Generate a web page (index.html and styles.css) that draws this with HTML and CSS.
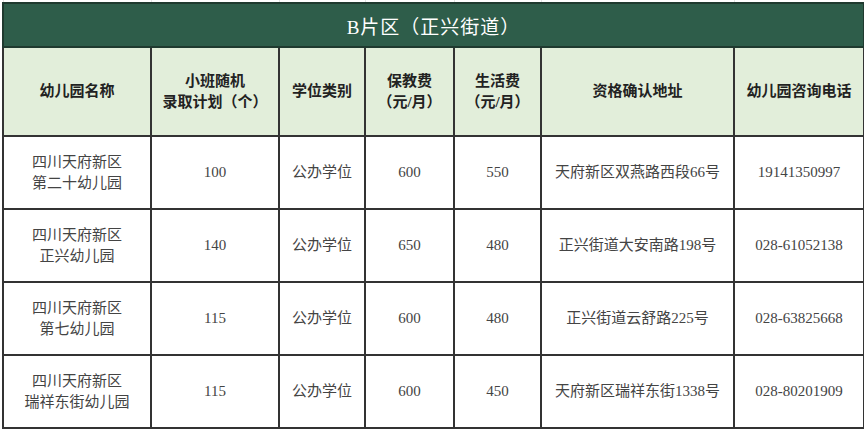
FILE: index.html
```html
<!DOCTYPE html>
<html lang="zh-CN">
<head>
<meta charset="utf-8">
<title>B片区（正兴街道）</title>
<link rel="stylesheet" href="styles.css">
</head>
<body>
<table class="sheet">
  <colgroup>
    <col class="c1"><col class="c2"><col class="c3"><col class="c4"><col class="c5"><col class="c6"><col class="c7">
  </colgroup>
  <tr class="ghost"><td></td><td></td><td></td><td></td><td></td><td></td><td></td></tr>
  <tr class="title"><th colspan="7">B片区（正兴街道）</th></tr>
  <tr class="head">
    <th>幼儿园名称</th>
    <th>小班随机<br>录取计划（个）</th>
    <th>学位类别</th>
    <th>保教费<br>（元/月）</th>
    <th>生活费<br>（元/月）</th>
    <th>资格确认地址</th>
    <th>幼儿园咨询电话</th>
  </tr>
  <tr class="row">
    <td>四川天府新区<br>第二十幼儿园</td>
    <td>100</td>
    <td>公办学位</td>
    <td>600</td>
    <td>550</td>
    <td>天府新区双燕路西段66号</td>
    <td>19141350997</td>
  </tr>
  <tr class="row">
    <td>四川天府新区<br>正兴幼儿园</td>
    <td>140</td>
    <td>公办学位</td>
    <td>650</td>
    <td>480</td>
    <td>正兴街道大安南路198号</td>
    <td>028-61052138</td>
  </tr>
  <tr class="row">
    <td>四川天府新区<br>第七幼儿园</td>
    <td>115</td>
    <td>公办学位</td>
    <td>600</td>
    <td>480</td>
    <td>正兴街道云舒路225号</td>
    <td>028-63825668</td>
  </tr>
  <tr class="row">
    <td>四川天府新区<br>瑞祥东街幼儿园</td>
    <td>115</td>
    <td>公办学位</td>
    <td>600</td>
    <td>450</td>
    <td>天府新区瑞祥东街1338号</td>
    <td>028-80201909</td>
  </tr>
</table>
</body>
</html>
```

FILE: styles.css
```css
html, body {
  margin: 0;
  padding: 0;
  background: #ffffff;
}

body {
  font-family: "Liberation Serif", "Noto Sans CJK SC", serif;
}

.sheet {
  margin-left: 2px;
  border-collapse: collapse;
  table-layout: fixed;
  width: 861px;
}

.c1 { width: 148px; }
.c2 { width: 128px; }
.c3 { width: 86px; }
.c4 { width: 89px; }
.c5 { width: 87px; }
.c6 { width: 193px; }
.c7 { width: 130px; }

.sheet th,
.sheet td {
  border: 2px solid #333333;
  padding: 0;
  text-align: center;
  vertical-align: middle;
}

.ghost td {
  height: 2px;
  border: 1px solid #e4e4e4;
  border-bottom: none;
  border-top: none;
}

.title th {
  height: 42px;
  background: #2e5d4a;
  color: #ffffff;
  font-size: 19px;
  font-weight: normal;
  letter-spacing: 1px;
  border-color: #1f3a2f;
}

.head th {
  height: 87px;
  background: #e2eeda;
  color: #222222;
  font-size: 15px;
  font-weight: bold;
  line-height: 21px;
}

.row td {
  height: 71px;
  color: #444444;
  font-size: 15px;
  line-height: 21px;
}
```
